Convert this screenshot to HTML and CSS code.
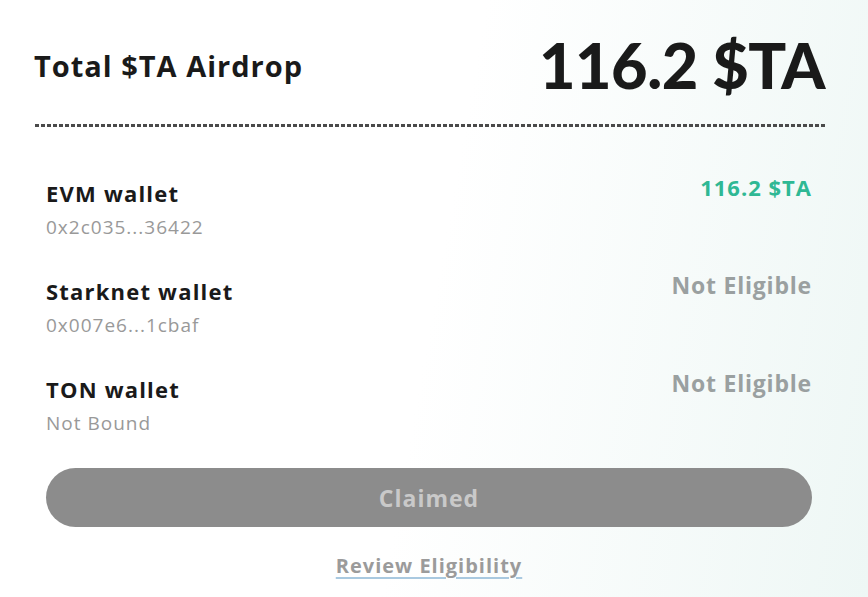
FILE: index.html
```html
<!DOCTYPE html>
<html lang="en">
<head>
    <meta charset="UTF-8">
    <meta name="viewport" content="width=device-width, initial-scale=1.0">
    <title>$TA Airdrop</title>
    <link rel="stylesheet" href="styles.css">
</head>
<body>

    <div class="airdrop-card">
        <div class="header">
            <h2 class="header-title">Total $TA Airdrop</h2>
            <div class="header-amount">116.2 $TA</div>
        </div>

        <div class="divider"></div>

        <div class="wallet-list">
            <div class="wallet-row">
                <div class="wallet-info">
                    <div class="wallet-name">EVM wallet</div>
                    <div class="wallet-address">0x2c035...36422</div>
                </div>
                <div class="wallet-value eligible">116.2 $TA</div>
            </div>

            <div class="wallet-row">
                <div class="wallet-info">
                    <div class="wallet-name">Starknet wallet</div>
                    <div class="wallet-address">0x007e6...1cbaf</div>
                </div>
                <div class="wallet-value">Not Eligible</div>
            </div>

            <div class="wallet-row">
                <div class="wallet-info">
                    <div class="wallet-name">TON wallet</div>
                    <div class="wallet-address">Not Bound</div>
                </div>
                <div class="wallet-value">Not Eligible</div>
            </div>

            <button class="claim-button" disabled>Claimed</button>

            <a class="review-link" href="#">Review Eligibility</a>
        </div>
    </div>

</body>
</html>
```

FILE: styles.css
```css
/* General Styles */
body {
    margin: 0;
    padding: 0;
    height: 597px;
    overflow: hidden;
    font-family: 'Open Sans', sans-serif;
    color: #1a1a1a;
    background: linear-gradient(100deg, #ffffff 50%, #eef7f5 100%);
}

.airdrop-card {
    padding: 30px 43px 0 33px;
}

/* Header */
.header {
    display: flex;
    justify-content: space-between;
    align-items: center;
    height: 70px;
}

.header-title {
    margin: 0 0 0 1px;
    font-size: 29px;
    font-weight: 700;
    letter-spacing: 1px;
    color: #1a1a1a;
}

.header-amount {
    font-family: 'Lato', sans-serif;
    font-size: 63px;
    font-weight: 900;
    letter-spacing: -0.5px;
    color: #1a1a1a;
    line-height: 70px;
}

.divider {
    margin-top: 24px;
    height: 3px;
    background: repeating-linear-gradient(to left, #4a4a4a 0, #4a4a4a 4px, transparent 4px, transparent 6px);
}

/* Wallet rows */
.wallet-list {
    display: flex;
    flex-direction: column;
    padding: 52px 13px 0 13px;
}

.wallet-row {
    display: flex;
    justify-content: space-between;
    align-items: flex-start;
    margin-bottom: 38px;
}

.wallet-name {
    font-size: 22px;
    font-weight: 700;
    line-height: 28px;
    letter-spacing: 1.2px;
    color: #1a1a1a;
}

.wallet-address {
    margin-top: 8px;
    font-size: 19px;
    line-height: 24px;
    letter-spacing: 1px;
    color: #999999;
}

.wallet-value {
    margin-top: -6px;
    font-size: 23px;
    font-weight: 700;
    line-height: 28px;
    letter-spacing: 0.8px;
    color: #9aa0a0;
}

.wallet-value.eligible {
    font-size: 22px;
    letter-spacing: 1px;
    color: #2fb894;
}

/* Button */
.claim-button {
    margin-top: -5px;
    height: 59px;
    border: none;
    border-radius: 30px;
    background-color: #8c8c8c;
    color: #c9c9c9;
    font-family: 'Open Sans', sans-serif;
    font-size: 23px;
    font-weight: 700;
    letter-spacing: 1px;
}

.review-link {
    align-self: center;
    margin-top: 25px;
    font-size: 20px;
    font-weight: 700;
    letter-spacing: 1px;
    color: #9b9b9b;
    text-decoration: underline;
    text-decoration-color: #a9c9e0;
    text-decoration-thickness: 2px;
    text-underline-offset: 4px;
}
```
